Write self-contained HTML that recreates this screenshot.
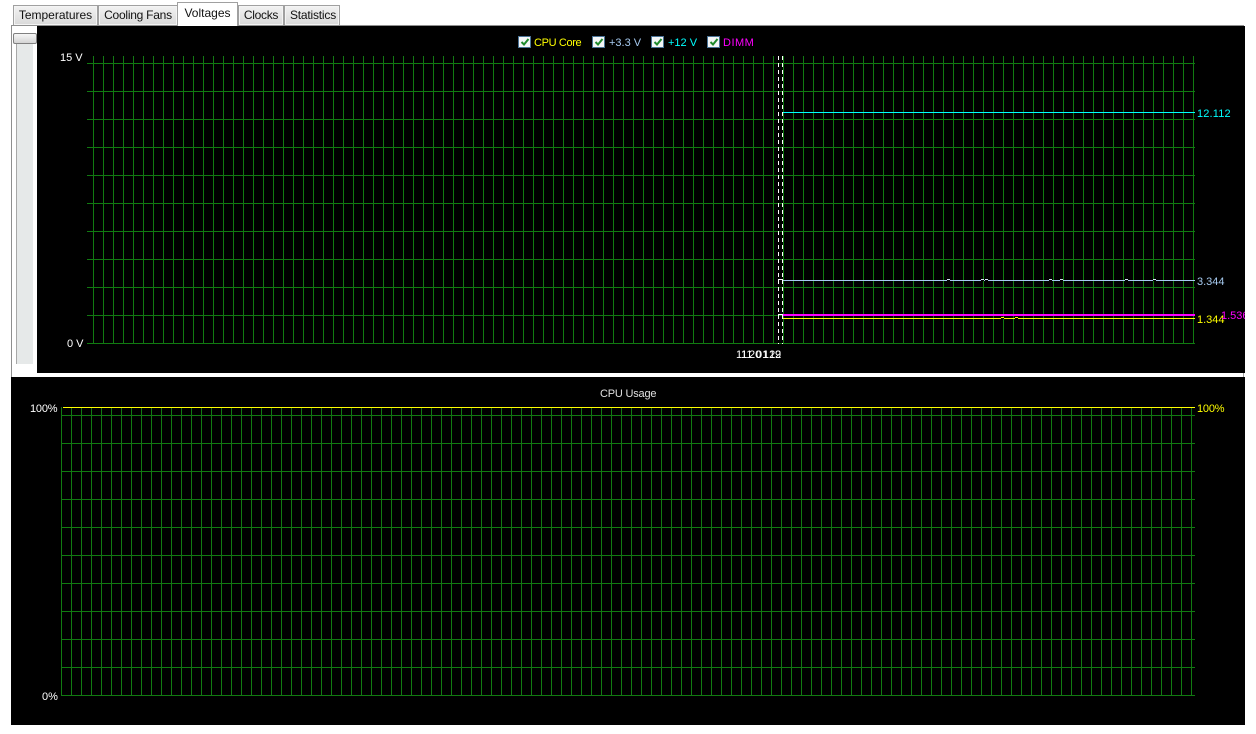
<!DOCTYPE html>
<html>
<head>
<meta charset="utf-8">
<style>
html,body{margin:0;padding:0;background:#fff;width:1256px;height:734px;overflow:hidden}
body{position:relative;font:11px/14px "Liberation Sans",sans-serif}
div,span{position:absolute;box-sizing:border-box}
.t{white-space:nowrap;height:14px}
.tab{top:5px;height:20px;border:1px solid #a0a0a0;border-bottom:0;background:linear-gradient(#f2f2f2,#d9d9d9);font-size:12px;line-height:19px;text-align:center;color:#111;box-shadow:inset 0 0 0 1px #f4f4f4}
.v{background-image:linear-gradient(to right,#117a11 1px,transparent 1px);background-size:10px 100%}
.h{background-image:linear-gradient(#117a11 1px,transparent 1px);background-size:100% 28px}
.cb{top:36px;width:13px;height:12px;background:#f4f6f8;border:1px solid #4a7396}
.cb svg{position:absolute;left:1px;top:0}
.l{height:1px}
</style>
</head>
<body>
<div style="left:11px;top:25px;width:1233px;height:1px;background:#8f8f8f"></div>
<div style="left:11px;top:25px;width:1px;height:352px;background:#8f8f8f"></div>

<div class="tab" style="left:13px;width:85px">Temperatures</div>
<div class="tab" style="left:98px;width:80px;letter-spacing:-.25px">Cooling Fans</div>
<div class="tab" style="left:238px;width:46px;letter-spacing:-.3px">Clocks</div>
<div class="tab" style="left:284px;width:56px;letter-spacing:-.2px;padding-left:2px">Statistics</div>
<div class="tab" style="left:177px;top:2px;width:61px;height:24px;background:#fff;box-shadow:none;line-height:20px">Voltages</div>

<div style="left:16px;top:44px;width:17px;height:320px;background:#e6e9e9;border-left:1px solid #a8a8a8"></div>
<div style="left:13px;top:33px;width:24px;height:11px;border:1px solid #808080;border-radius:2px;background:linear-gradient(#f6f6f6,#d4d4d4)"></div>

<div style="left:37px;top:26px;width:1208px;height:347px;background:#000"></div>
<div style="left:11px;top:377px;width:1234px;height:348px;background:#000"></div>
<div style="left:1243px;top:373px;width:1px;height:4px;background:#a0a0a0"></div>

<div class="v" style="left:93px;top:56px;width:1101px;height:288px"></div>
<div class="h" style="left:87px;top:63px;width:1108px;height:281px"></div>

<div class="v" style="left:61px;top:407px;width:1131px;height:289px"></div>
<div class="h" style="left:61px;top:415px;width:1134px;height:281px"></div>

<div class="cb" style="left:518px"><svg width="10" height="10" viewBox="0 0 10 10"><path d="M1.5 5 L4 7.5 L8.5 2" fill="none" stroke="#1f8a2c" stroke-width="2"/></svg></div>
<div class="cb" style="left:592px"><svg width="10" height="10" viewBox="0 0 10 10"><path d="M1.5 5 L4 7.5 L8.5 2" fill="none" stroke="#1f8a2c" stroke-width="2"/></svg></div>
<div class="cb" style="left:651px"><svg width="10" height="10" viewBox="0 0 10 10"><path d="M1.5 5 L4 7.5 L8.5 2" fill="none" stroke="#1f8a2c" stroke-width="2"/></svg></div>
<div class="cb" style="left:707px"><svg width="10" height="10" viewBox="0 0 10 10"><path d="M1.5 5 L4 7.5 L8.5 2" fill="none" stroke="#1f8a2c" stroke-width="2"/></svg></div>
<span class="t" style="left:534px;top:36px;color:#ff0;letter-spacing:-.35px">CPU Core</span>
<span class="t" style="left:609px;top:36px;color:#a6caf0">+3.3 V</span>
<span class="t" style="left:668px;top:36px;color:#0ff">+12 V</span>
<span class="t" style="left:723px;top:36px;color:#f0f;letter-spacing:.5px">DIMM</span>

<span class="t" style="left:60px;top:51px;color:#fff">15 V</span>
<span class="t" style="left:67px;top:337px;color:#fff">0 V</span>

<div class="l" style="left:782px;top:112px;width:413px;background:#0ff"></div>
<div class="l" style="left:782px;top:280px;width:413px;background:#a6caf0"></div>
<div class="l" style="left:782px;top:314px;width:413px;background:#f0f;height:2px"></div>
<div class="l" style="left:782px;top:318px;width:413px;background:#ff0"></div>

<div style="left:778px;top:56px;width:1px;height:288px;background:repeating-linear-gradient(#fff 0 4px,transparent 4px 7px)"></div>
<div style="left:782px;top:56px;width:1px;height:288px;background:repeating-linear-gradient(#fff 0 4px,transparent 4px 7px)"></div>
<div class="l" style="left:778px;top:279px;width:5px;background:#fff"></div>
<div class="l" style="left:778px;top:314px;width:5px;background:#fff"></div>

<div class="l" style="left:947px;top:279px;width:3px;background:#d8e6f6"></div><div class="l" style="left:947px;top:280px;width:3px;background:#000"></div>
<div class="l" style="left:981px;top:279px;width:3px;background:#d8e6f6"></div><div class="l" style="left:981px;top:280px;width:3px;background:#000"></div>
<div class="l" style="left:985px;top:279px;width:3px;background:#d8e6f6"></div><div class="l" style="left:985px;top:280px;width:3px;background:#000"></div>
<div class="l" style="left:1049px;top:279px;width:3px;background:#d8e6f6"></div><div class="l" style="left:1049px;top:280px;width:3px;background:#000"></div>
<div class="l" style="left:1060px;top:279px;width:3px;background:#d8e6f6"></div><div class="l" style="left:1060px;top:280px;width:3px;background:#000"></div>
<div class="l" style="left:1125px;top:279px;width:3px;background:#d8e6f6"></div><div class="l" style="left:1125px;top:280px;width:3px;background:#000"></div>
<div class="l" style="left:1153px;top:279px;width:3px;background:#d8e6f6"></div><div class="l" style="left:1153px;top:280px;width:3px;background:#000"></div>
<div class="l" style="left:1001px;top:317px;width:3px;background:#ff0"></div><div class="l" style="left:1001px;top:318px;width:3px;background:#000"></div>
<div class="l" style="left:1015px;top:317px;width:3px;background:#ff0"></div><div class="l" style="left:1015px;top:318px;width:3px;background:#000"></div>

<span class="t" style="left:736px;top:348px;color:#fff">11</span>
<span class="t" style="left:741px;top:348px;color:#fff">11</span>
<span class="t" style="left:749px;top:348px;color:#fff">20</span>
<span class="t" style="left:756px;top:348px;color:#fff">01</span>
<span class="t" style="left:763px;top:348px;color:#fff">12</span>
<span class="t" style="left:769px;top:348px;color:#fff">12</span>
<span class="t" style="left:775px;top:348px;color:#fff">9</span>

<span class="t" style="left:1197px;top:107px;color:#0ff;letter-spacing:.15px">12.112</span>
<span class="t" style="left:1197px;top:275px;color:#a6caf0">3.344</span>
<span class="t" style="left:1197px;top:313px;color:#ff0">1.344</span>
<div style="left:1221px;top:309px;width:24px;height:14px;overflow:hidden"><span class="t" style="left:0;top:0;color:#f0f">1.536</span></div>

<div class="l" style="left:63px;top:407px;width:1132px;background:#ff0"></div>
<span class="t" style="left:600px;top:387px;color:#e0e0e0;letter-spacing:-.2px">CPU Usage</span>
<span class="t" style="left:30px;top:402px;color:#fff;letter-spacing:-.2px">100%</span>
<span class="t" style="left:42px;top:690px;color:#fff">0%</span>
<span class="t" style="left:1197px;top:402px;color:#ff0;letter-spacing:-.2px">100%</span>
</body>
</html>
